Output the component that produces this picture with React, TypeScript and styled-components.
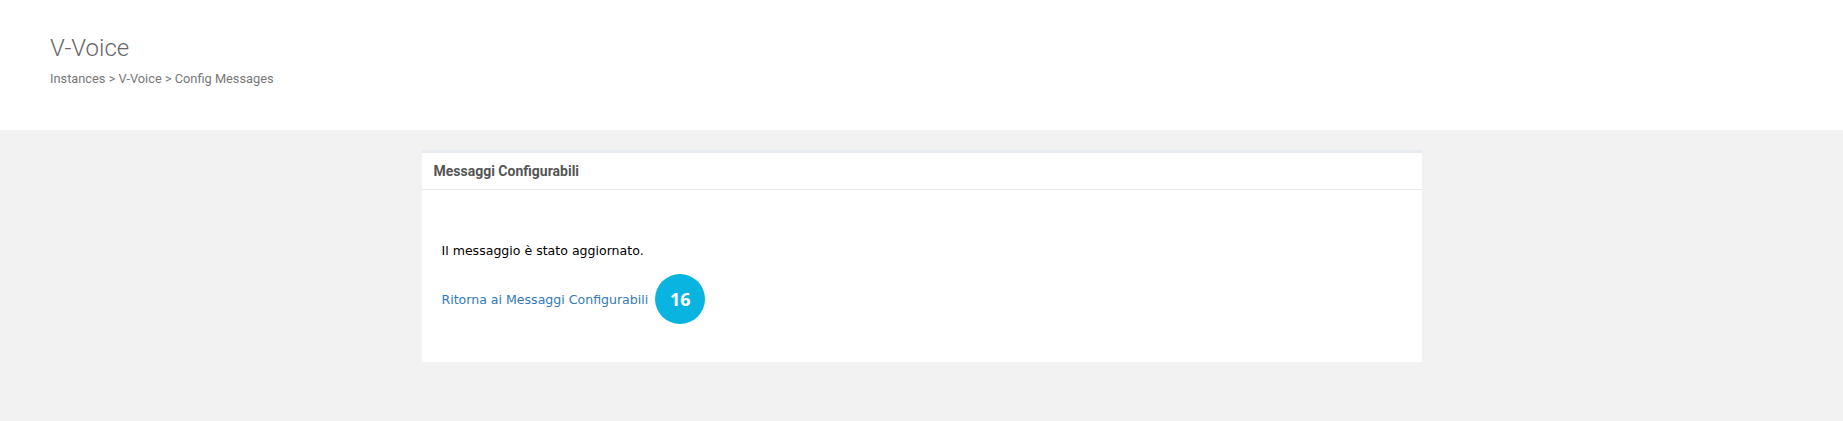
import * as React from "react";
import styled, { createGlobalStyle } from "styled-components";

const GlobalStyle = createGlobalStyle`
  html, body {
    margin: 0;
    padding: 0;
    background: #f2f2f2;
  }
  body {
    font-family: Roboto, "Liberation Sans", sans-serif;
  }
`;

const Page = styled.div`
  min-height: 421px;
  background: #f2f2f2;
`;

const PageHeader = styled.header`
  background: #ffffff;
  height: 130px;
  box-sizing: border-box;
  padding: 31px 50px 0 50px;
`;

const Title = styled.h1`
  margin: 0;
  font-family: Roboto, sans-serif;
  font-weight: 300;
  font-size: 24px;
  line-height: 34px;
  color: #666666;
`;

const Breadcrumb = styled.div`
  margin-top: 6px;
  font-family: Roboto, sans-serif;
  font-size: 12.8px;
  line-height: 16px;
  color: #777777;
`;

const Content = styled.main`
  display: flex;
  justify-content: center;
  padding-top: 20px;
`;

const Card = styled.section`
  width: 1000px;
  background: #ffffff;
  border-top: 3px solid #e7eaee;
`;

const CardHeader = styled.div`
  height: 36px;
  display: flex;
  align-items: center;
  padding: 0 12px;
  border-bottom: 1px solid #e7e9ec;
  font-family: Roboto, sans-serif;
  font-weight: 700;
  font-size: 14px;
  color: #555555;
`;

const CardBody = styled.div`
  padding: 54px 20px 38px 20px;
  font-family: "DejaVu Sans", Verdana, sans-serif;
  font-size: 12.55px;
`;

const Message = styled.p`
  margin: 0;
  color: #000000;
  line-height: 14px;
`;

const LinkRow = styled.div`
  display: flex;
  align-items: center;
  gap: 7px;
  margin-top: 16px;
`;

const BackLink = styled.a`
  color: #337ab7;
  text-decoration: none;
`;

const Badge = styled.span`
  width: 50px;
  height: 50px;
  border-radius: 50%;
  background: #0ab4e1;
  color: #ffffff;
  display: flex;
  align-items: center;
  justify-content: center;
  font-family: "Open Sans", sans-serif;
  font-weight: 700;
  font-size: 18px;
`;

const App = (): JSX.Element => {
  return (
    <Page>
      <GlobalStyle />
      <PageHeader>
        <Title>V-Voice</Title>
        <Breadcrumb>Instances &gt; V-Voice &gt; Config Messages</Breadcrumb>
      </PageHeader>
      <Content>
        <Card>
          <CardHeader>Messaggi Configurabili</CardHeader>
          <CardBody>
            <Message>Il messaggio è stato aggiornato.</Message>
            <LinkRow>
              <BackLink href="#">Ritorna ai Messaggi Configurabili</BackLink>
              <Badge>16</Badge>
            </LinkRow>
          </CardBody>
        </Card>
      </Content>
    </Page>
  );
};

export default App;
